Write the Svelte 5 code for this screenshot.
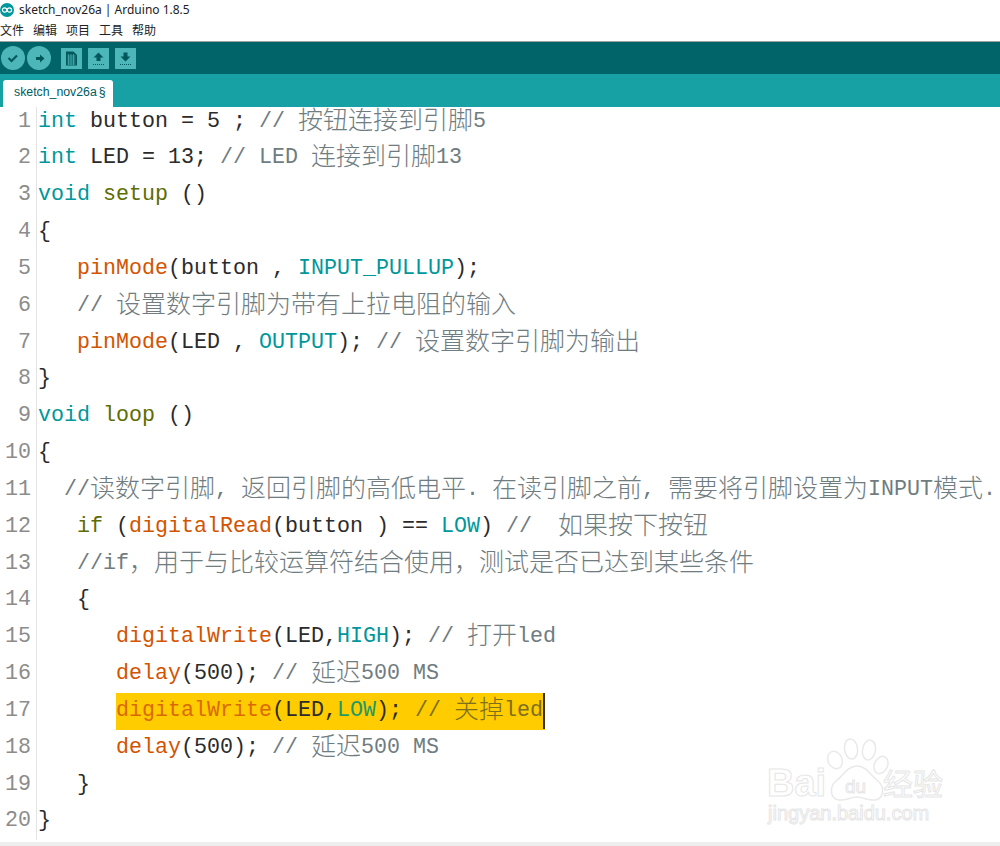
<script>
    const menus = ["文件", "编辑", "项目", "工具", "帮助"];

    // k keyword, f function, u constant, s structure, x comment
    const lines = [
        [["int", "k"], [" button = 5 ; "], ["// 按钮连接到引脚5", "x"]],
        [["int", "k"], [" LED = 13; "], ["// LED 连接到引脚13", "x"]],
        [["void", "k"], [" "], ["setup", "s"], [" ()"]],
        [["{"]],
        [["   "], ["pinMode", "f"], ["(button , "], ["INPUT_PULLUP", "u"], [");"]],
        [["   "], ["// 设置数字引脚为带有上拉电阻的输入", "x"]],
        [["   "], ["pinMode", "f"], ["(LED , "], ["OUTPUT", "u"], ["); "], ["// 设置数字引脚为输出", "x"]],
        [["}"]],
        [["void", "k"], [" "], ["loop", "s"], [" ()"]],
        [["{"]],
        [["  "], ["//读数字引脚, 返回引脚的高低电平. 在读引脚之前, 需要将引脚设置为INPUT模式.", "x"]],
        [["   "], ["if", "s"], [" ("], ["digitalRead", "f"], ["(button ) == "], ["LOW", "u"], [") "], ["//  如果按下按钮", "x"]],
        [["   "], ["//if，用于与比较运算符结合使用，测试是否已达到某些条件", "x"]],
        [["   {"]],
        [["      "], ["digitalWrite", "f"], ["(LED,"], ["HIGH", "u"], ["); "], ["// 打开led", "x"]],
        [["      "], ["delay", "f"], ["(500); "], ["// 延迟500 MS", "x"]],
        [["      "], ["digitalWrite", "f"], ["(LED,"], ["LOW", "u"], ["); "], ["// 关掉led", "x"]],
        [["      "], ["delay", "f"], ["(500); "], ["// 延迟500 MS", "x"]],
        [["   }"]],
        [["}"]],
    ];

    const selected = 16;

    function runs(text) {
        return text.split(/([\u3000-\u9fff\uff00-\uffef]+)/).filter((r) => r !== "");
    }
    function isCjk(run) {
        return /[\u3000-\u9fff\uff00-\uffef]/.test(run);
    }
</script>

<div class="window">
    <div class="title">
        <svg class="logo" width="15" height="15" viewBox="0 0 15 15">
            <circle cx="7" cy="8" r="7" fill="#00979c" />
            <circle cx="4.6" cy="8" r="2.2" fill="none" stroke="#fff" stroke-width="1.2" />
            <circle cx="9.4" cy="8" r="2.2" fill="none" stroke="#fff" stroke-width="1.2" />
        </svg>
        <span>sketch_nov26a | Arduino 1.8.5</span>
    </div>
    <div class="menu">
        {#each menus as m}
            <span>{m}</span>
        {/each}
    </div>

    <div class="toolbar">
        <div class="round">
            <svg width="24" height="24" viewBox="0 0 24 24">
                <path d="M7.500 12l3 3 5.500-5.500" fill="none" stroke="#00585c" stroke-width="2.200" />
            </svg>
        </div>
        <div class="round second">
            <svg width="24" height="24" viewBox="0 0 24 24">
                <path d="M9 11h4V8.500l4.500 4-4.500 4V14H9z" fill="#00585c" />
            </svg>
        </div>
        <div class="square first">
            <svg width="21" height="21" viewBox="0 0 21 21">
                <path d="M5 3.500h7.500l3.500 3.500v10.500h-11z" fill="#00585c" />
                <path d="M6.500 8h8M6.500 10h8M6.500 12h8M6.500 14h8M6.500 16h8M7.500 6v11M10 6v11M12.500 6v11" stroke="#4db6b9" stroke-width="0.7" />
            </svg>
        </div>
        <div class="square">
            <svg width="21" height="21" viewBox="0 0 21 21">
                <path d="M10.500 4.500l5 5h-3v3.500h-4v-3.500h-3z" fill="#00585c" />
                <path d="M5 16.500h11" stroke="#00585c" stroke-width="1.200" stroke-dasharray="1 1" />
            </svg>
        </div>
        <div class="square">
            <svg width="21" height="21" viewBox="0 0 21 21">
                <path d="M10.500 13.500l5-5h-3v-4h-4v4h-3z" fill="#00585c" />
                <path d="M5 16.500h11" stroke="#00585c" stroke-width="1.200" stroke-dasharray="1 1" />
            </svg>
        </div>
    </div>

    <div class="tabs">
        <div class="tab">sketch_nov26a<span class="mark">§</span></div>
    </div>

    <div class="editor">
        <div class="code">
            {#each lines as line, i}
                {@const tokens = i === selected ? line.slice(1) : line}
                <div class="row">
                    <div class="num">{i + 1}</div>
                    <div class="text">
                        <span class:sel={i === selected}>
                            {#each tokens as [text, cls]}<span class={cls}>{#each runs(text) as run}{#if isCjk(run)}<span class="cjk">{run}</span>{:else}{run}{/if}{/each}</span>{/each}{#if i === selected}<span class="caret"></span>{/if}
                        </span>
                    </div>
                </div>
            {/each}
        </div>

        <div class="watermark">
            <svg width="190" height="96" viewBox="0 0 190 96">
                <g fill="#fff" stroke="#e9e9e9" stroke-width="1.500">
                    <ellipse cx="68" cy="23" rx="7" ry="9" transform="rotate(-25 68 23)" />
                    <ellipse cx="84" cy="12" rx="6.500" ry="10" transform="rotate(-8 84 12)" />
                    <ellipse cx="102" cy="13" rx="6.500" ry="10" transform="rotate(10 102 13)" />
                    <ellipse cx="114" cy="28" rx="6.500" ry="9" transform="rotate(25 114 28)" />
                    <path d="M90 29c10 0 14 10 21 15 7 6 6 18-3 19-7 1-12-3-18-3s-11 4-18 3c-9-1-10-13-3-19 7-5 11-15 21-15z" />
                </g>
                <text class="wm-big" x="0" y="59">Bai</text>
                <text class="wm-du" x="78" y="56">du</text>
                <text class="wm-cn" x="116" y="58">经验</text>
                <text class="wm-url" x="1" y="83">jingyan.baidu.com</text>
            </svg>
        </div>
    </div>
</div>

<style>
    :global(body) {
        background: #fff;
    }
    .window {
        position: relative;
        display: flex;
        flex-direction: column;
        width: 1000px;
        height: 846px;
        overflow: hidden;
        background: #fff;
        font-family: "Noto Sans", "Noto Sans CJK SC", sans-serif;
    }
    .title {
        display: flex;
        align-items: center;
        gap: 4px;
        height: 19px;
        font-size: 12px;
        color: #222;
    }
    .logo {
        flex: none;
    }
    .menu {
        display: flex;
        gap: 9px;
        height: 22px;
        border-bottom: 1px solid #a0a0a0;
        font-family: "Noto Sans CJK SC", sans-serif;
        font-size: 12px;
        line-height: 22px;
        color: #222;
    }
    .toolbar {
        display: flex;
        align-items: center;
        gap: 6px;
        height: 32px;
        padding-left: 1px;
        background: #006468;
    }
    .round {
        width: 24px;
        height: 24px;
        border-radius: 50%;
        background: #4db6b9;
    }
    .round.second {
        margin-left: -4px;
    }
    .square {
        width: 21px;
        height: 21px;
        background: #4db6b9;
    }
    .square.first {
        margin-left: 4px;
    }
    .round svg,
    .square svg {
        display: block;
    }
    .tabs {
        position: relative;
        z-index: 1;
        display: flex;
        align-items: flex-end;
        height: 33px;
        padding-left: 3px;
        background: #17a1a5;
    }
    .tab {
        width: 110px;
        height: 27px;
        box-sizing: border-box;
        padding-left: 11px;
        border-radius: 3px 3px 0 0;
        background: #fff;
        color: #005c5f;
        font-family: "Liberation Sans", sans-serif;
        font-size: 12.3px;
        line-height: 25px;
        white-space: nowrap;
    }
    .mark {
        margin-left: 2px;
    }
    .editor {
        flex: 1;
        min-height: 0;
        border-bottom: 4px solid #eeeeee;
    }
    .code {
        margin-top: -3.4px;
        font-family: "Liberation Mono", monospace;
        font-size: 21.67px;
        color: #2b2b2b;
    }
    .row {
        display: flex;
        height: 36.84px;
        line-height: 36.84px;
        white-space: pre;
    }
    .num {
        flex: none;
        width: 31px;
        padding-right: 5px;
        border-right: 1px solid #e3e3e3;
        text-align: right;
        color: #8c8c8c;
    }
    .text {
        padding-left: 1px;
    }
    .cjk {
        font-family: "Noto Sans CJK SC", sans-serif;
        font-size: 25px;
        font-weight: 300;
        line-height: 1;
        vertical-align: -2px;
    }
    .k,
    .u {
        color: #00979c;
    }
    .f {
        color: #d35400;
    }
    .s {
        color: #5e6d03;
    }
    .x {
        color: #6f7c80;
    }
    .sel {
        display: inline-block;
        height: 36.84px;
        margin-left: 78px;
        background: #ffcc00;
    }
    .sel .f {
        color: #d96a00;
    }
    .sel .u {
        color: #1e9a68;
    }
    .sel .x {
        color: #7d6f20;
    }
    .caret {
        display: inline-block;
        width: 2px;
        height: 36px;
        vertical-align: top;
        background: #3a3000;
    }
    .watermark {
        position: absolute;
        left: 767px;
        top: 737px;
    }
    .watermark text {
        fill: #fff;
        stroke: #e6e6e6;
        stroke-width: 1;
    }
    .wm-big {
        font-family: "Liberation Sans", sans-serif;
        font-size: 38px;
        font-weight: 700;
    }
    .wm-du {
        font-family: "Liberation Sans", sans-serif;
        font-size: 19px;
    }
    .wm-cn {
        font-family: "Noto Sans CJK SC", sans-serif;
        font-size: 30px;
    }
    .wm-url {
        font-family: "Liberation Sans", sans-serif;
        font-size: 20px;
    }
</style>
